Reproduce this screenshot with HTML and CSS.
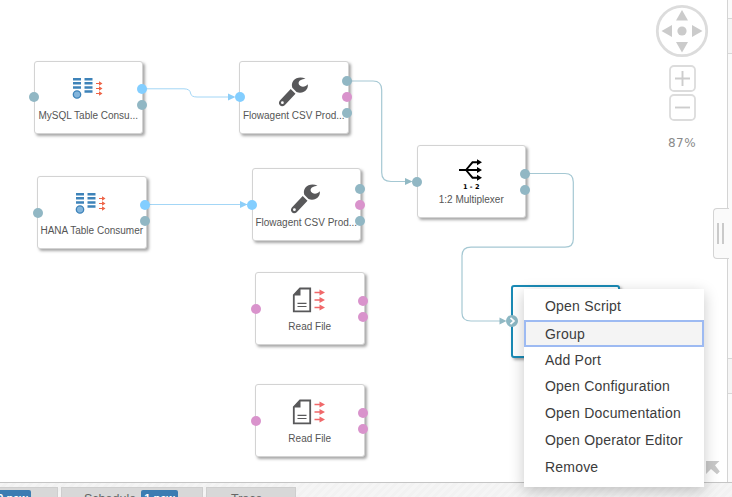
FILE: index.html
```
<!DOCTYPE html>
<html lang="en">
<head>
<meta charset="utf-8">
<title>Graph editor</title>
<link rel="stylesheet" href="styles.css">
</head>
<body>
<svg class="symbols" aria-hidden="true">
  <symbol id="table" viewBox="0 0 32 24">
    <g fill="#3e83b9"><path d="M1 1h8v2.500H1zM1 5h8v2.500H1zM1 9.200h8v2.500H1zM12.500 1h8v2.500h-8zM12.500 5h8v2.500h-8zM12.500 9.200h8v2.500h-8zM12.500 13.200h8v2.500h-8z"/></g>
    <circle cx="5" cy="17.500" r="3.700" fill="#83b5dc" stroke="#3e83b9" stroke-width="1.300"/>
    <g fill="#ee6548"><path d="M24 6h3V4.200L30.500 6.500 27 8.800V7h-3zM24 11h3V9.200l3.500 2.300L27 13.800V12h-3zM24 16h3v-1.800l3.500 2.300-3.500 2.300V17h-3z"/></g>
  </symbol>
  <symbol id="wrench" viewBox="0 0 32 32">
    <path fill="#58585a" fill-rule="evenodd" d="M28.500 2.700C24.500.5 19 1.200 16.500 4.500c-1.700 2.200-2 4.500-1.200 7.200l4.200 4.400c4 1.400 8.300.3 10.200-2.800 1-1.500 1.300-3 1.100-5.100-1.800 2.200-4.800 3.200-7.300 1.800-2.600-1.500-2.400-4.300-.1-5.700 1.500-1 3.300-1.200 5.100-1.600zM13.700 13l4.800 4.700L7.700 29.200c-1.500 1.500-3.600 1.400-4.800.1-1.300-1.300-1.300-3.300 0-4.700zM5.400 25.300a1.400 1.400 0 1 0 0 2.800 1.400 1.400 0 0 0 0-2.800z"/>
  </symbol>
  <symbol id="file" viewBox="0 0 34 26">
    <path d="M8 1.500h10.200v22.800H1.800V8z" fill="#fff" stroke="#58585a" stroke-width="1.800"/>
    <path d="M8.500 1v7.500H1z" fill="#58585a"/>
    <path d="M5.500 16.300h9M5.500 19.500h9" stroke="#58585a" stroke-width="1.200"/>
    <path d="M22.500 5.500H29M22.500 13H29M22.500 20.500H29" stroke="#f0686a" stroke-width="1.400"/>
    <path d="M27.500 2.500l5.500 3-5.500 3zM27.500 10l5.500 3-5.500 3zM27.500 17.500l5.500 3-5.500 3z" fill="#f0686a"/>
  </symbol>
  <symbol id="split" viewBox="0 0 26 22">
    <path d="M1 11h19M8 11l6.500-7.700H20M8 11l6.500 7.700H20" fill="none" stroke="#000" stroke-width="1.900"/>
    <path d="M19 .3l5 3-5 3zM19 8l5 3-5 3zM19 15.700l5 3-5 3z"/>
  </symbol>
</svg>

<div class="editor">
  <main class="canvas">
    <svg class="wires" viewBox="0 0 727 482">
      <g fill="none" stroke="#a3d6f6">
        <path d="M142 88.800H184Q190 89 190.500 93T197 97H232"/>
        <path d="M146 204.500H247"/>
      </g>
      <g fill="none" stroke="#a5c8d3" stroke-width="1.200">
        <path d="M348 81H373Q381.700 81 381.700 90V172.500Q381.700 181.500 391 181.500H408"/>
        <path d="M525 173.500H565Q573.300 173.500 573.300 182V239Q573.300 247.200 565 247.200H471Q462 247.200 462 256V313Q462 321 471 321H501"/>
      </g>
      <g fill="#8dcef8"><path d="M228 93.500l7.500 3.500-7.500 3.500zM240 201l7.500 3.500-7.500 3.500z"/></g>
      <g fill="#91b9c4"><path d="M405 178l7.500 3.500-7.500 3.500zM499.500 317.500l7 3.500-7 3.500z"/></g>
    </svg>

    <section class="node mysql">
      <div class="ports in"><i></i></div>
      <svg class="icon table"><use href="#table"/></svg>
      <span class="label">MySQL Table Consu...</span>
      <div class="ports out"><i class="blue"></i><i></i></div>
    </section>
    <section class="node csv-one">
      <div class="ports in"><i class="blue"></i></div>
      <svg class="icon wrench"><use href="#wrench"/></svg>
      <span class="label">Flowagent CSV Prod...</span>
      <div class="ports out"><i></i><i class="pink"></i><i></i></div>
    </section>
    <section class="node hana">
      <div class="ports in"><i></i></div>
      <svg class="icon table"><use href="#table"/></svg>
      <span class="label">HANA Table Consumer</span>
      <div class="ports out"><i class="blue"></i><i></i></div>
    </section>
    <section class="node csv-two">
      <div class="ports in"><i class="blue"></i></div>
      <svg class="icon wrench"><use href="#wrench"/></svg>
      <span class="label">Flowagent CSV Prod...</span>
      <div class="ports out"><i></i><i class="pink"></i><i></i></div>
    </section>
    <section class="node read-one">
      <div class="ports in"><i class="pink"></i></div>
      <svg class="icon file"><use href="#file"/></svg>
      <span class="label">Read File</span>
      <div class="ports out"><i class="pink"></i><i class="pink"></i></div>
    </section>
    <section class="node read-two">
      <div class="ports in"><i class="pink"></i></div>
      <svg class="icon file"><use href="#file"/></svg>
      <span class="label">Read File</span>
      <div class="ports out"><i class="pink"></i><i class="pink"></i></div>
    </section>
    <section class="node multiplexer">
      <div class="ports in"><i></i></div>
      <svg class="icon split"><use href="#split"/></svg>
      <span class="ratio">1 - 2</span>
      <span class="label">1:2 Multiplexer</span>
      <div class="ports out"><i></i><i></i></div>
    </section>
    <section class="node selected">
      <svg class="plug" viewBox="0 0 14 14"><circle cx="7" cy="7" r="6" fill="#8db8c4"/><path d="M5.500 3.800L9 7l-3.500 3.200" fill="none" stroke="#fff" stroke-width="1.700"/></svg>
    </section>

    <div class="zoombar">
      <svg class="pan" viewBox="0 0 54 54">
        <circle cx="27" cy="27" r="24.700" fill="#fff" stroke="#dcdcdc" stroke-width="2.800"/>
        <path fill="#cbcbcb" d="M27 6l6 10.500H21zM27 48.500l-6-10.500h12zM6.500 27L17 21v12zM47.500 27L37 21v12z"/>
        <circle cx="27" cy="27" r="4.600" fill="#cbcbcb"/>
      </svg>
      <svg class="zoom" viewBox="0 0 27 27"><rect x="1" y="1" width="25" height="25" rx="4" fill="#fff" stroke="#dcdcdc" stroke-width="1.800"/><path d="M6 13.500h15M13.500 6v15" stroke="#cdcdcd" stroke-width="1.900"/></svg>
      <svg class="zoom" viewBox="0 0 27 27"><rect x="1" y="1" width="25" height="25" rx="4" fill="#fff" stroke="#dcdcdc" stroke-width="1.800"/><path d="M6 13.500h15" stroke="#cdcdcd" stroke-width="1.900"/></svg>
      <span class="percent">87%</span>
    </div>
    <div class="grip"><b></b><b></b></div>
    <svg class="corner" viewBox="0 0 14 14"><path fill="#c9c9c9" d="M0 0h13.500L9 4.200l4.800 6.300-2.800 2.700L5 8 0 13z"/></svg>
  </main>
  <aside class="side"><div class="row one"></div><div class="row two"></div><div class="row three"></div><div class="row four"></div></aside>
</div>
<footer class="tabs">
  <div class="tab first"><span class="badge">0 new</span></div>
  <div class="tab schedule">Schedule <span class="badge">1 new</span></div>
  <div class="tab trace">Trace</div>
</footer>

<ul class="menu">
  <li>Open Script</li>
  <li class="active">Group</li>
  <li>Add Port</li>
  <li>Open Configuration</li>
  <li>Open Documentation</li>
  <li>Open Operator Editor</li>
  <li>Remove</li>
</ul>
</body>
</html>
```
FILE: styles.css
```
* { box-sizing: border-box; }
body {
  margin: 0;
  width: 732px;
  height: 497px;
  overflow: hidden;
  position: relative;
  display: flex;
  flex-direction: column;
  background: #fff;
  font-family: "Liberation Sans", Arial, sans-serif;
}
.symbols { position: absolute; width: 0; height: 0; }
.editor { display: flex; height: 482px; flex: none; }
.canvas { position: relative; width: 727px; background: #fff; }
.wires { display: block; width: 727px; height: 482px; }

.node {
  position: absolute;
  width: 109.500px;
  height: 73px;
  border: 1.500px solid #d3d3d3;
  border-radius: 3px;
  background: #fff;
  box-shadow: 2px 2px 3px rgba(0, 0, 0, .35);
  display: flex;
  flex-direction: column;
  align-items: center;
}
.mysql { left: 33.500px; top: 60.500px; }
.csv-one { left: 239px; top: 60.500px; }
.hana { left: 37px; top: 176px; }
.csv-two { left: 251.500px; top: 168px; }
.read-one { left: 255px; top: 272px; }
.read-two { left: 255px; top: 384px; }
.multiplexer { left: 416.500px; top: 145px; }
.selected { left: 510.500px; top: 284.500px; border: 2px solid #1a8ab5; }

.ports {
  position: absolute;
  top: 0;
  bottom: 0;
  width: 10px;
  display: flex;
  flex-direction: column;
  justify-content: center;
  gap: 6px;
}
.ports.in { left: -5.500px; }
.ports.out { right: -4.500px; }
.ports i { width: 10px; height: 10px; border-radius: 50%; background: #91b7c4; }
.ports .blue { background: #83ceff; }
.ports .pink { background: #d993cc; }
.plug { position: absolute; left: -8px; top: 27.500px; width: 14px; height: 14px; }

.label {
  font-size: 10px;
  line-height: 12px;
  color: #555;
  white-space: nowrap;
}
.icon { flex: none; }
.table { width: 32px; height: 24px; margin: 15px 1px 9px 0; }
.wrench { width: 32px; height: 32px; margin: 14px 2px 2px 0; }
.file { width: 34px; height: 26px; margin: 14px 1px 8px 0; }
.split { width: 26px; height: 22px; margin: 13px 0 0; }
.ratio { font: bold 6.600px/7px "DejaVu Sans", sans-serif; color: #000; margin: 3px 0; }

.zoombar {
  position: absolute;
  left: 655px;
  top: 4px;
  width: 54px;
  display: flex;
  flex-direction: column;
  align-items: center;
}
.pan { width: 54px; height: 54px; margin-bottom: 7px; }
.zoom { width: 27px; height: 27px; margin-bottom: 2px; }
.percent { margin-top: 12px; font: 12px/16px "DejaVu Sans", sans-serif; letter-spacing: .5px; color: #8a8a8a; }
.grip {
  position: absolute;
  left: 712.500px;
  top: 208px;
  width: 16px;
  height: 51px;
  border: 1px solid #d4d4d4;
  border-right: 0;
  border-radius: 4px 0 0 4px;
  background: #fafafa;
  display: flex;
  align-items: center;
  padding-left: 3px;
  gap: 2.500px;
  z-index: 1;
}
.grip b { width: 2.500px; height: 21px; background: #cacaca; }
.corner { position: absolute; left: 706px; top: 461px; width: 14px; height: 14px; }
.side { width: 5px; border-left: 1px solid #d4d4d4; background: #fafafa; }
.row { border-bottom: 1px solid #d8d8d8; }
.one { height: 19px; }
.two { height: 35px; background: #f5f5f5; }
.three { height: 305px; }
.four { height: 35px; background: #f5f5f5; }

.tabs {
  height: 15px;
  flex: none;
  display: flex;
  gap: 3px;
  padding-top: 4px;
  border-top: 1px solid #c5c5c5;
  background: repeating-linear-gradient(135deg, #f5f5f5 0 3px, #f2f2f2 3px 6px);
  overflow: hidden;
}
.tab {
  height: 23px;
  display: flex;
  align-items: center;
  gap: 5px;
  border: 1px solid #cecece;
  background: #d8d8d8;
  color: #666;
  font-size: 12.500px;
  white-space: nowrap;
}
.first { width: 58px; padding-left: 0; border-left: 0; }
.schedule { width: 142px; padding-left: 22px; }
.trace { width: 90px; padding-left: 24px; }
.badge {
  width: 37px;
  height: 17px;
  border-radius: 2px;
  background: #3b7cb2;
  color: #fff;
  font-size: 11px;
  font-weight: bold;
  line-height: 16px;
  text-align: center;
}
.first .badge { margin-left: -6px; }

.menu {
  position: absolute;
  left: 524px;
  top: 289px;
  width: 180px;
  height: 198px;
  margin: 0;
  padding: 4px 0 0;
  list-style: none;
  background: #fff;
  box-shadow: 0 4px 14px rgba(0, 0, 0, .22);
  z-index: 2;
}
.menu li {
  height: 26.750px;
  padding-left: 21px;
  line-height: 27px;
  font-size: 14px;
  letter-spacing: .2px;
  color: #3c3c3c;
}
.menu .active {
  padding-left: 19px;
  line-height: 24px;
  border: 2px solid #9dbaf2;
  background: #f4f4f4;
}
```
